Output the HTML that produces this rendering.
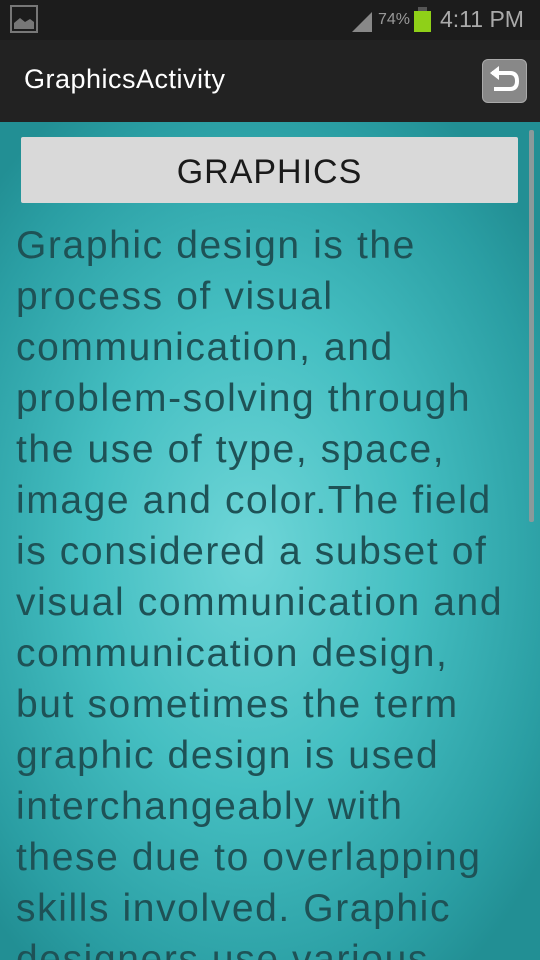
<!DOCTYPE html>
<html><head><style>
html,body{margin:0;padding:0;overflow:hidden;width:540px;height:960px}
body{position:relative;font-family:"Liberation Sans",sans-serif;background:#1e1e1e}
.sb{position:absolute;top:0;left:0;width:540px;height:40px;background:#1c1c1c}
.ab{position:absolute;top:40px;left:0;width:540px;height:82px;background:#222}
.title{position:absolute;left:24px;top:24px;color:#fff;font-size:27px;letter-spacing:0.5px}
.content{position:absolute;top:122px;left:0;width:540px;height:838px;background:radial-gradient(ellipse 360px 520px at 250px 430px,#6fd6d8 0%,#45bfc2 45%,#2a9ea3 85%,#228f94 100%)}
.btn{position:absolute;left:21px;top:137px;width:497px;height:66px;background:#d9d9d9;border-radius:2px;text-align:center;line-height:70px;font-size:34px;color:#1a1a1a;letter-spacing:1px}
.txt{position:absolute;left:16px;top:220px;width:524px;font-size:39px;line-height:51px;color:#1e5256;letter-spacing:1.6px;white-space:nowrap}
.scroll{position:absolute;left:529px;top:130px;width:5px;height:392px;background:#8a9a9b;border-radius:2px}
</style></head><body>
<div class="sb">
<svg style="position:absolute;left:10px;top:5px" width="28" height="28"><rect x="1" y="1" width="26" height="26" fill="none" stroke="#777" stroke-width="2"/><path d="M4 24 L4 18 L10 13 L15 17 L20 14 L24 17 L24 24Z" fill="#777"/></svg>
<svg style="position:absolute;left:350px;top:10px" width="24" height="22"><path d="M2 22 L22 2 L22 22Z" fill="#888"/></svg>
<span style="position:absolute;left:378px;top:11px;color:#999;font-size:16px">74%</span>
<div style="position:absolute;left:414px;top:11px;width:17px;height:21px;background:#8fd018"></div>
<div style="position:absolute;left:418px;top:7px;width:9px;height:4px;background:#555"></div>
<span style="position:absolute;left:440px;top:6px;color:#aaa;font-size:23px">4:11 PM</span>
</div>
<div class="ab"><div class="title">GraphicsActivity</div>
<div style="position:absolute;left:482px;top:19px;width:43px;height:42px;background:#888;border-radius:6px;border:1px solid #aaa"></div>
<svg style="position:absolute;left:486px;top:23px" width="36" height="36"><path d="M6 10 L24 10 Q31 10 31 18 Q31 26 24 26 L8 26" fill="none" stroke="#fff" stroke-width="4"/><path d="M4 10 L13 3 L13 17Z" fill="#fff"/></svg>
</div>
<div class="content"></div>
<div class="btn">GRAPHICS</div>
<div class="scroll"></div>
<div class="txt">Graphic design is the<br>process of visual<br>communication, and<br>problem-solving through<br>the use of type, space,<br>image and color.The field<br>is considered a subset of<br>visual communication and<br>communication design,<br>but sometimes the term<br>graphic design is used<br>interchangeably with<br>these due to overlapping<br>skills involved. Graphic<br>designers use various</div>
</body></html>
